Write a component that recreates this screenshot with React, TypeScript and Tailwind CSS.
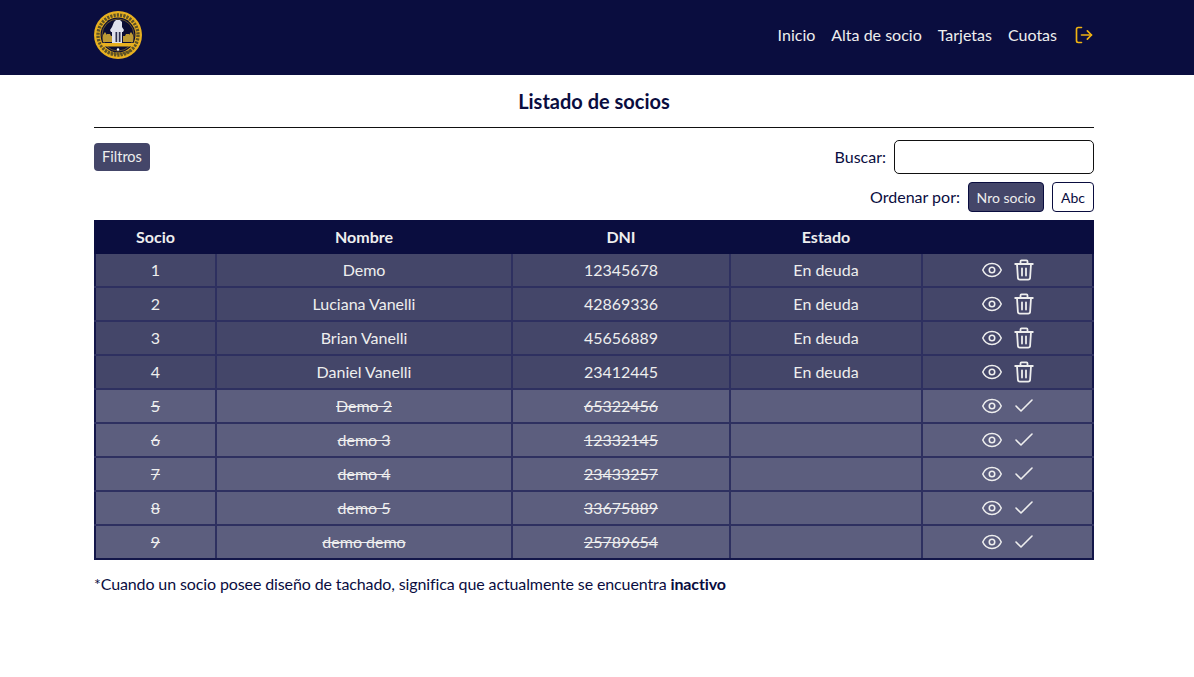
import { Check, Eye, LogOut } from "lucide-react";

const rows = [
  { n: 1, name: "Demo", dni: "12345678", on: true },
  { n: 2, name: "Luciana Vanelli", dni: "42869336", on: true },
  { n: 3, name: "Brian Vanelli", dni: "45656889", on: true },
  { n: 4, name: "Daniel Vanelli", dni: "23412445", on: true },
  { n: 5, name: "Demo 2", dni: "65322456", on: false },
  { n: 6, name: "demo 3", dni: "12332145", on: false },
  { n: 7, name: "demo 4", dni: "23433257", on: false },
  { n: 8, name: "demo 5", dni: "33675889", on: false },
  { n: 9, name: "demo demo", dni: "25789654", on: false },
];

function Logo() {
  return (
    <svg width="48" height="48" viewBox="0 0 48 48" className="block">
      <circle cx="24" cy="24" r="24" fill="#e8b020" />
      <circle cx="24" cy="24" r="20" fill="none" stroke="#5e5226" strokeWidth="3.4" strokeDasharray="2.2 1.1" />
      <circle cx="24" cy="24" r="17.5" fill="#0b0d33" />
      <circle cx="24" cy="24" r="16" fill="none" stroke="#a98a2a" strokeWidth="0.6" />
      <path d="M9 31v-7l2-3 2 3v-1h3l1 2h2v6zM39 31v-7l-2-3-2 3v-1h-3l-1 2h-2v6z" fill="#bd9a35" />
      <path d="M20 11l2-2h4l2 2v5l2 3-1 2h-1v11h-10V21h-1l-1-2 2-3z" fill="#dfe1ec" />
      <path d="M21.5 21h1.7v10h-1.7zM24.8 21h1.7v10h-1.7z" fill="#30324f" />
      <path d="M7 32h34l-2 3.5H9z" fill="#e8b020" />
      <path d="M11 39.5q13 6 26 0" fill="none" stroke="#5e5226" strokeWidth="2.6" strokeDasharray="2 1" />
      <circle cx="24" cy="38.5" r="1.2" fill="#fff" />
    </svg>
  );
}

function TrashIcon() {
  return (
    <svg width="24" height="24" viewBox="0 0 24 24" fill="none" stroke="currentColor" strokeWidth="1.8" strokeLinecap="round" strokeLinejoin="round">
      <path d="M3.2 6h17.6" />
      <path d="M8.5 6V3.4a1 1 0 0 1 1-1h5a1 1 0 0 1 1 1V6" />
      <path d="M5 6l.9 13.8a2 2 0 0 0 2 1.9h8.2a2 2 0 0 0 2-1.9L19 6" />
      <path d="M10 10.5v7" />
      <path d="M14 10.5v7" />
    </svg>
  );
}

export default function App() {
  return (
    <div className="min-h-[677px] bg-white font-['Lato','Noto_Sans',sans-serif] text-[#0a0d3f]">
      <header className="h-[75px] bg-[#0a0d3f]">
        <div className="ml-[94px] flex h-full w-[1000px] items-center justify-between">
          <div className="-mt-[5px]">
            <Logo />
          </div>
          <nav className="-mt-[5px] flex items-center text-[16px] text-[#eeeeee]">
            <a className="mr-4">Inicio</a>
            <a className="mr-4">Alta de socio</a>
            <a className="mr-4">Tarjetas</a>
            <a className="mr-[17px]">Cuotas</a>
            <LogOut size={20} strokeWidth={2} className="text-[#f0b312]" />
          </nav>
        </div>
      </header>
      <main className="ml-[94px] w-[1000px]">
        <h1 className="flex h-[53px] items-center justify-center border-b border-[#111111] text-[20px] font-bold">
          Listado de socios
        </h1>
        <div className="mt-3 flex items-start justify-between">
          <button className="mt-[3px] h-[28px] w-[56px] rounded bg-[#444669] text-[14.5px] text-[#eeeeee]">Filtros</button>
          <div className="flex items-center gap-2 text-[16px]">
            <span>Buscar:</span>
            <input className="h-[34px] w-[200px] rounded-[5px] border border-[#111111] bg-white" />
          </div>
        </div>
        <div className="mt-2 flex items-center justify-end text-[16px]">
          <span className="mr-2">Ordenar por:</span>
          <button className="mr-2 h-[30px] w-[76px] rounded border border-[#0a0d3f] bg-[#444669] text-[14px] text-[#eeeeee]">
            Nro socio
          </button>
          <button className="h-[30px] w-[42px] rounded border border-[#0a0d3f] bg-white text-[14px]">Abc</button>
        </div>
        <table className="mt-2 w-[1000px] table-fixed border-collapse text-center text-[16px] text-[#eeeeee]">
          <thead>
            <tr className="h-[32px] bg-[#0a0d3f] text-[16px] font-bold">
              <th className="w-[121px] border-2 border-[#0a0d3f] p-0">Socio</th>
              <th className="w-[296px] border-2 border-[#0a0d3f] p-0">Nombre</th>
              <th className="w-[218px] border-2 border-[#0a0d3f] p-0">DNI</th>
              <th className="w-[192px] border-2 border-[#0a0d3f] p-0">Estado</th>
              <th className="border-2 border-[#0a0d3f] p-0"></th>
            </tr>
          </thead>
          <tbody>
            {rows.map((r) => {
              const cell =
                "h-[34px] border-2 border-[#2e3060] p-0 first:border-l-[#14174a] last:border-r-[#14174a] " +
                (r.n === 9 ? "border-b-[#14174a] " : "") +
                (r.on ? "" : "line-through");
              return (
                <tr key={r.n} className={r.on ? "bg-[#444669]" : "bg-[#5c5e7e]"}>
                  <td className={cell}>{r.n}</td>
                  <td className={cell}>{r.name}</td>
                  <td className={cell}>{r.dni}</td>
                  <td className={cell}>{r.on ? "En deuda" : ""}</td>
                  <td className={cell}>
                    <div className="flex items-center justify-center gap-[9px] pl-[2px]">
                      <Eye size={22} strokeWidth={1.7} />
                      {r.on ? <TrashIcon /> : <Check size={24} strokeWidth={1.6} />}
                    </div>
                  </td>
                </tr>
              );
            })}
          </tbody>
        </table>
        <p className="mt-[12px] text-[16px] tracking-[-0.115px]">
          *Cuando un socio posee diseño de tachado, significa que actualmente se encuentra <b>inactivo</b>
        </p>
      </main>
    </div>
  );
}
